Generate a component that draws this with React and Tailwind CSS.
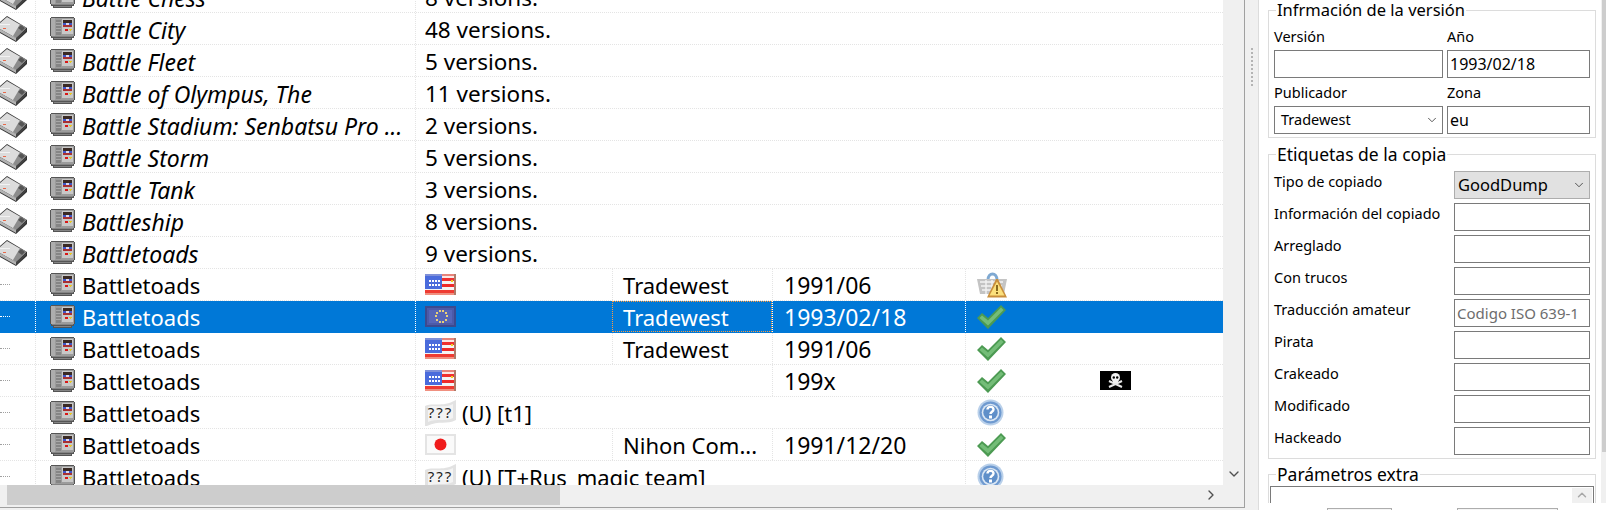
import { ChevronDown, ChevronRight, ChevronUp } from "lucide-react";

const FONT = "[font-family:'Noto_Sans','Open_Sans',sans-serif]";

function Px({ items }) {
  return items.map(([x, y, w, h, c], i) => <rect key={i} x={x} y={y} width={w} height={h} fill={c} />);
}

function ConsoleIcon() {
  return (
    <svg width="27" height="27" viewBox="0 0 27 27" className="absolute left-0 top-[3px]">
      <polygon points="7,0 27,12 27,16 16,26 0,17 0,6" fill="#333" />
      <polygon points="7,1 26,12 16,22 0,13 0,7" fill="#dcdcdc" />
      <polygon points="20,8 26,12 16,22 13,20" fill="#8c8c8c" />
      <polygon points="21,9 25,12 22,15 18,12" fill="#555" />
      <polygon points="0,13 16,22 16,25 0,16" fill="#b2b2b2" />
      <polygon points="16,22 26,13 26,15 16,25" fill="#444" />
      <rect x="3" y="12" width="3" height="1" fill="#e8694a" />
      <rect x="0" y="8" width="10" height="1" fill="#f2f2f2" />
    </svg>
  );
}

function CartIcon() {
  return (
    <svg width="25" height="23" viewBox="0 0 25 23" shapeRendering="crispEdges" className="shrink-0">
      <Px
        items={[
          [1, 0, 23, 1, "#555"],
          [0, 1, 25, 18, "#555"],
          [1, 19, 23, 2, "#555"],
          [3, 21, 19, 2, "#555"],
          [1, 1, 23, 18, "#9c9c9c"],
          [2, 19, 21, 1, "#858585"],
          [4, 21, 17, 1, "#858585"],
          [1, 1, 4, 18, "#adadad"],
          [6, 3, 5, 15, "#858585"],
          [6, 5, 5, 1, "#a8a8a8"],
          [6, 8, 5, 1, "#a8a8a8"],
          [6, 11, 5, 1, "#a8a8a8"],
          [6, 14, 5, 1, "#a8a8a8"],
          [12, 2, 11, 15, "#c8c8c8"],
          [13, 3, 9, 3, "#3a2a24"],
          [13, 6, 3, 2, "#3f55c8"],
          [16, 6, 3, 2, "#d8d8f0"],
          [19, 6, 3, 2, "#3f55c8"],
          [13, 8, 9, 2, "#a83030"],
          [15, 12, 3, 2, "#d81818"],
          [19, 12, 3, 1, "#e8c820"],
          [20, 13, 1, 1, "#e8c820"],
        ]}
      />
    </svg>
  );
}

function FlagUS() {
  const dots = [];
  for (let x = 4; x < 14; x += 3) {
    dots.push([x, 6, 2, 2, "#fff"]);
    dots.push([x, 10, 2, 2, "#fff"]);
  }
  return (
    <svg width="31" height="21" viewBox="0 0 31 21" shapeRendering="crispEdges">
      <Px
        items={[
          [0, 0, 31, 21, "#f4f4f4"],
          [0, 0, 17, 15, "#4a6bdc"],
          [0, 0, 17, 2, "#7f90d8"],
          [17, 0, 14, 2, "#e8837a"],
          [17, 4, 14, 3, "#f03030"],
          [17, 10, 14, 3, "#ee2a2a"],
          [0, 16, 31, 3, "#ef3b32"],
          [0, 19, 31, 2, "#f09080"],
          [17, 2, 14, 2, "#fbe8e4"],
          [29, 0, 2, 21, "#b07a68"],
          [26, 6, 2, 2, "#f0d020"],
          ...dots,
        ]}
      />
    </svg>
  );
}

function FlagEU() {
  const stars = [
    [14, 4], [17, 4], [11, 6], [20, 6], [10, 9], [21, 9], [11, 13], [20, 13], [14, 15], [17, 15],
  ];
  return (
    <svg width="31" height="21" viewBox="0 0 31 21" shapeRendering="crispEdges">
      <Px
        items={[
          [0, 0, 31, 21, "#3d4a8e"],
          [2, 2, 27, 17, "#4c5aa8"],
          [4, 4, 23, 13, "#5666b8"],
          ...stars.map(([x, y]) => [x, y, 2, 2, "#e8cf78"]),
        ]}
      />
    </svg>
  );
}

function FlagJP() {
  return (
    <svg width="31" height="21" viewBox="0 0 31 21">
      <rect width="31" height="21" fill="#e4e4e4" />
      <rect x="2" y="2" width="27" height="17" fill="#fafafa" />
      <circle cx="15.5" cy="10.5" r="6" fill="#f01c1c" />
    </svg>
  );
}

function FlagUnknown() {
  return (
    <svg width="31" height="26" viewBox="0 0 31 26" className="shrink-0">
      <path d="M0 6 C8 2 16 8 31 0 V20 C22 25 14 20 2 26 H0 Z" fill="#e2e2e2" />
      <path d="M3 7 C10 4 18 9 28 4 V18 C20 22 12 18 3 22 Z" fill="#f3f3f3" />
      <text x="15.5" y="18" textAnchor="middle" fontSize="15" fill="#222" letterSpacing="2" fontFamily="'Noto Sans', sans-serif">???</text>
    </svg>
  );
}

function CheckIcon() {
  return (
    <svg width="29" height="24" viewBox="0 0 29 24">
      <path d="M0 13 L5 8 L11 13 L24 0 L29 5 L11 24 Z" fill="#4c9a52" />
      <path d="M2.5 13 L5 10.5 L11 15.5 L24 2.5 L26.5 5 L11 20.5 Z" fill="#74bd78" />
    </svg>
  );
}

function HelpIcon() {
  return (
    <svg width="27" height="27" viewBox="0 0 27 27" className="shrink-0">
      <circle cx="13.5" cy="13.5" r="13" fill="#b9d0ea" />
      <circle cx="13.5" cy="13.5" r="11" fill="#6f9ad0" />
      <circle cx="13.5" cy="13.5" r="8.8" fill="#dbe7f4" />
      <circle cx="13.5" cy="13.5" r="7.2" fill="#5f8fc9" />
      <path d="M10.5 10.5 C10.5 7 16.5 7 16.5 10.5 C16.5 12.8 13.5 12.8 13.5 15" fill="none" stroke="#fff" strokeWidth="2.4" />
      <rect x="12" y="16.5" width="3" height="3" fill="#fff" />
    </svg>
  );
}

function WarnIcon() {
  return (
    <svg width="30" height="26" viewBox="0 0 30 26">
      <path d="M11 8 C11 0 20 0 20 8" fill="none" stroke="#7fa9d2" strokeWidth="3" />
      <path d="M0 7 H30 L27 22 H3 Z" fill="#c4c4c4" />
      <path d="M3 10 H26 M4 14 H25 M5 18 H24 M9 8 V22 M15 8 V22" stroke="#f2f2f2" strokeWidth="1.4" />
      <path d="M10 25.5 L19 7 L21 7 L30 25.5 Z" fill="#c98f3c" />
      <path d="M12.5 23.5 L20 9.5 L27.5 23.5 Z" fill="#fbe07c" />
      <rect x="19" y="13" width="2" height="6" fill="#8a6a1e" />
      <rect x="19" y="20" width="2" height="2" fill="#8a6a1e" />
    </svg>
  );
}

function SkullIcon() {
  return (
    <svg width="31" height="19" viewBox="0 0 31 19" className="ml-[94px] shrink-0">
      <rect width="31" height="19" fill="#000" />
      <path d="M9 10 L22 16 M22 10 L9 16" stroke="#e8e8e8" strokeWidth="2" />
      <circle cx="15.5" cy="6.5" r="4.5" fill="#f0f0f0" />
      <rect x="13" y="9" width="5" height="3" fill="#f0f0f0" />
      <circle cx="13.8" cy="6.5" r="1.2" fill="#000" />
      <circle cx="17.2" cy="6.5" r="1.2" fill="#000" />
    </svg>
  );
}

const groups = [
  ["Battle Chess", "8 versions."],
  ["Battle City", "48 versions."],
  ["Battle Fleet", "5 versions."],
  ["Battle of Olympus, The", "11 versions."],
  ["Battle Stadium: Senbatsu Pro ...", "2 versions."],
  ["Battle Storm", "5 versions."],
  ["Battle Tank", "3 versions."],
  ["Battleship", "8 versions."],
  ["Battletoads", "9 versions."],
];

function GroupRow({ name, count }) {
  return (
    <div className="flex h-8 items-center border-b border-dotted border-[#e4e4e4]">
      <div className="relative h-full w-[35px] shrink-0">
        <ConsoleIcon />
      </div>
      <NameCell name={name} sep="border-[#e4e4e4]" italic />
      <div className="flex h-full flex-1 items-center border-l border-dotted border-[#e4e4e4] pt-[2px] pl-[9px] text-[22.5px]">{count}</div>
    </div>
  );
}

function NameCell({ name, sep, italic }) {
  return (
    <div className={`flex h-full w-[380px] shrink-0 items-center gap-[7px] border-l border-dotted pl-[14px] ${sep}`}>
      <CartIcon />
      <span className={`whitespace-nowrap ${italic ? "pt-[3px] text-[23px] italic" : "pt-[1px]"}`}>{name}</span>
    </div>
  );
}

function VersionRow({ selected, flag, text, spanFlag, publisher, date, status, pirate }) {
  const sep = selected ? "border-white" : "border-[#e4e4e4]";
  return (
    <div className={`flex h-8 items-center border-b border-dotted ${selected ? "border-b-[#0078d7] bg-[#0078d7] text-white" : "border-[#e4e4e4]"}`}>
      <div className="flex h-full w-[35px] shrink-0 items-center">
        <div className={`w-[10px] border-t border-dotted ${selected ? "border-white" : "border-[#a0a0a0]"}`} />
      </div>
      <NameCell name="Battletoads" sep={sep} />
      <div className={`flex h-full shrink-0 items-center gap-[6px] border-l border-dotted pl-[9px] ${sep} ${spanFlag === "date" ? "w-[550px]" : spanFlag === "pub" ? "w-[357px]" : "w-[197px]"}`}>
        {flag}
        {text && <span className="whitespace-nowrap pt-[1px]">{text}</span>}
      </div>
      {!spanFlag && !selected && (
        <div className={`flex h-full w-[160px] shrink-0 items-center border-l border-dotted pt-[1px] pl-[10px] ${sep}`}>{publisher}</div>
      )}
      {selected && (
        <div className="flex h-full w-[160px] shrink-0 items-center border border-dotted border-[#ff9a3c] pt-[1px] pl-[10px]">{publisher}</div>
      )}
      {spanFlag !== "date" && (
        <div className={`flex h-full w-[193px] shrink-0 items-center border-l border-dotted pt-[1px] pl-[11px] text-[23px] ${sep}`}>{date}</div>
      )}
      <div className={`flex h-full flex-1 items-center border-l border-dotted pl-[11px] ${sep}`}>
        {status}
        {pirate && <SkullIcon />}
      </div>
    </div>
  );
}

function TextField({ value, muted, className }) {
  return (
    <input
      readOnly
      value={value || ""}
      className={`h-7 border border-[#7a7a7a] bg-white px-[2px] outline-none ${muted ? "text-[15px] text-[#6d6d6d]" : "text-[16px] text-black"} ${className || ""}`}
    />
  );
}

function Combo({ value, gray, className }) {
  return (
    <div className={`flex h-7 items-center justify-between border ${gray ? "border-[#adadad] bg-[#e1e1e1] pr-[3px] pl-[3px] text-[16.5px]" : "border-[#7a7a7a] bg-white pr-[3px] pl-[6px] text-[14.5px]"} ${className || ""}`}>
      <span>{value}</span>
      <ChevronDown size={14} strokeWidth={1.4} color="#333" />
    </div>
  );
}

const tagRows = [
  ["Información del copiado"],
  ["Arreglado"],
  ["Con trucos"],
  ["Traducción amateur", "Codigo ISO 639-1"],
  ["Pirata"],
  ["Crakeado"],
  ["Modificado"],
  ["Hackeado"],
];

function TagRow({ label, children }) {
  return (
    <div className="flex h-7 items-start justify-between">
      <span className="text-[14.5px] leading-[21px]">{label}</span>
      {children}
    </div>
  );
}

export default function App() {
  return (
    <div className={`flex h-[510px] w-[1606px] overflow-hidden bg-[#f0f0f0] text-black ${FONT}`}>
      {/* game list */}
      <div className="flex h-[508px] w-[1245px] shrink-0 flex-col border-r border-b border-[#a0a0a0]">
        <div className="flex h-[485px] shrink-0">
          <div className="h-full w-[1223px] overflow-hidden bg-white text-[22px]">
            <div className="-mt-[19px]">
              {groups.map((g) => (
                <GroupRow key={g[0]} name={g[0]} count={g[1]} />
              ))}
              <VersionRow flag={<FlagUS />} publisher="Tradewest" date="1991/06" status={<WarnIcon />} />
              <VersionRow selected flag={<FlagEU />} publisher="Tradewest" date="1993/02/18" status={<CheckIcon />} />
              <VersionRow flag={<FlagUS />} publisher="Tradewest" date="1991/06" status={<CheckIcon />} />
              <VersionRow flag={<FlagUS />} spanFlag="pub" date="199x" status={<CheckIcon />} pirate />
              <VersionRow flag={<FlagUnknown />} text="(U) [t1]" spanFlag="date" status={<HelpIcon />} />
              <VersionRow flag={<FlagJP />} publisher="Nihon Com..." date="1991/12/20" status={<CheckIcon />} />
              <VersionRow flag={<FlagUnknown />} text="(U) [T+Rus_magic team]" spanFlag="date" status={<HelpIcon />} />
            </div>
          </div>
          <div className="flex flex-1 items-end justify-center pb-[3px]">
            <ChevronDown size={16} strokeWidth={2} color="#505050" />
          </div>
        </div>
        <div className="flex h-5 w-[1223px] shrink-0 items-center">
          <div className="ml-[7px] h-full w-[553px] bg-[#cdcdcd]" />
          <div className="flex flex-1 justify-end pr-[4px]">
            <ChevronRight size={16} strokeWidth={2} color="#505050" />
          </div>
        </div>
      </div>

      {/* splitter */}
      <div className="flex w-[13px] shrink-0 justify-center pt-[48px]">
        <div className="h-[38px] w-[2px] border-l-2 border-dotted border-[#b4b4b4]" />
      </div>

      {/* properties */}
      <div className="flex h-[510px] flex-1 flex-col border-l border-[#dcdcdc] bg-white">
        <div className="flex h-[503px] shrink-0 overflow-hidden">
          <div className="w-[337px] shrink-0 pl-[9px] text-[15px]">
            <fieldset className="w-[328px] border border-[#dcdcdc] px-[5px] pb-[3px]">
              <legend className="ml-[2px] px-[1px] text-[16.5px] leading-[20px]">Infrmación de la versión</legend>
              <div className="grid grid-cols-[169px_143px] gap-x-[4px]">
                <span className="pt-[3px] text-[14.5px] leading-[27px]">Versión</span>
                <span className="pt-[3px] text-[14.5px] leading-[27px]">Año</span>
                <TextField />
                <TextField value="1993/02/18" />
                <span className="text-[14.5px] leading-[28px]">Publicador</span>
                <span className="text-[14.5px] leading-[28px]">Zona</span>
                <Combo value="Tradewest" />
                <TextField value="eu" />
              </div>
            </fieldset>
            <fieldset className="mt-[6px] w-[328px] border border-[#dcdcdc] px-[5px] pb-[3px]">
              <legend className="ml-[2px] px-[1px] text-[17.5px] leading-[20px]">Etiquetas de la copia</legend>
              <div className="flex flex-col gap-1 pt-[7px]">
                <TagRow label="Tipo de copiado">
                  <Combo value="GoodDump" gray className="w-[136px]" />
                </TagRow>
                {tagRows.map((r) => (
                  <TagRow key={r[0]} label={r[0]}>
                    <TextField value={r[1]} muted className="w-[136px]" />
                  </TagRow>
                ))}
              </div>
            </fieldset>
            <fieldset className="mt-[5px] w-[328px] border border-[#dcdcdc] px-[1px]">
              <legend className="ml-[6px] px-[1px] text-[17.5px] leading-[20px]">Parámetros extra</legend>
              <div className="mt-[2px] flex h-8 justify-end border border-[#7a7a7a] pt-[1px] pr-[1px]">
                <div className="flex h-5 w-5 items-start justify-center bg-[#f0f0f0]">
                  <ChevronUp size={14} strokeWidth={2.5} color="#a8a8a8" />
                </div>
              </div>
            </fieldset>
          </div>
          <div className="ml-[5px] flex h-full flex-1 justify-end bg-[#f0f0f0]">
            <div className="h-[452px] w-[4px] bg-[#cdcdcd]" />
          </div>
        </div>
        <div className="flex h-[7px] overflow-visible pt-[5px]">
          <div className="ml-[68px] h-5 w-[65px] shrink-0 border border-[#adadad] bg-[#f5f5f5]" />
          <div className="ml-[65px] h-5 w-[101px] shrink-0 border border-[#adadad] bg-[#f5f5f5]" />
        </div>
      </div>
    </div>
  );
}
